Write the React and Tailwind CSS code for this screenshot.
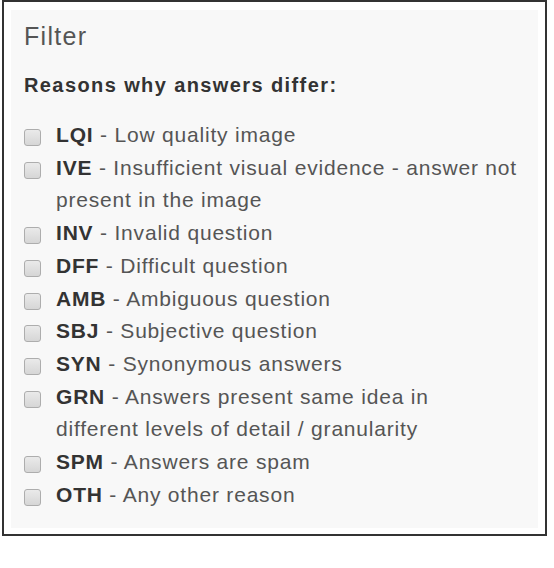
import React from 'react';

// each reason's description, split where the original wraps
const reasons = [
    { code: 'LQI', lines: ['Low quality image'] },
    { code: 'IVE', lines: ['Insufficient visual evidence - answer not', 'present in the image'] },
    { code: 'INV', lines: ['Invalid question'] },
    { code: 'DFF', lines: ['Difficult question'] },
    { code: 'AMB', lines: ['Ambiguous question'] },
    { code: 'SBJ', lines: ['Subjective question'] },
    { code: 'SYN', lines: ['Synonymous answers'] },
    { code: 'GRN', lines: ['Answers present same idea in', 'different levels of detail / granularity'] },
    { code: 'SPM', lines: ['Answers are spam'] },
    { code: 'OTH', lines: ['Any other reason'] },
];

const Checkbox = () => (
    <span className="mt-[10px] w-[17px] h-[17px] shrink-0 rounded-[3px] border border-[#adadad] bg-gradient-to-b from-[#eaeaea] to-[#d6d6d6]" />
);

export default function App() {
    return (
        <div className="bg-white pl-[2px] font-[family-name:'Liberation_Sans',Arial,sans-serif]">
            <div className="w-[545px] border-2 border-[#333] px-[7px] pt-[8px] pb-[6px]">
                <div className="bg-[#f8f8f8] pl-[13px] pt-[11px] pb-[17px]">
                    {/* Panel heading */}
                    <h3 className="text-[25px] leading-[30px] tracking-[1.3px] text-[#555]">Filter</h3>
                    <p className="mt-[22px] text-[20px] leading-[24px] font-bold tracking-[1.4px] text-[#333]">
                        Reasons why answers differ:
                    </p>

                    {/* Reason checkboxes */}
                    <ul className="mt-[22px]">
                        {reasons.map(r => (
                            <li key={r.code} className="flex">
                                <Checkbox />
                                <label className="ml-[15px] whitespace-nowrap text-[21px] leading-[32.7px] tracking-[0.8px] text-[#555]">
                                    <span className="font-bold text-[#333]">{r.code}</span> - {r.lines[0]}
                                    {r.lines[1] && (
                                        <>
                                            <br />
                                            {r.lines[1]}
                                        </>
                                    )}
                                </label>
                            </li>
                        ))}
                    </ul>
                </div>
            </div>
        </div>
    );
}
